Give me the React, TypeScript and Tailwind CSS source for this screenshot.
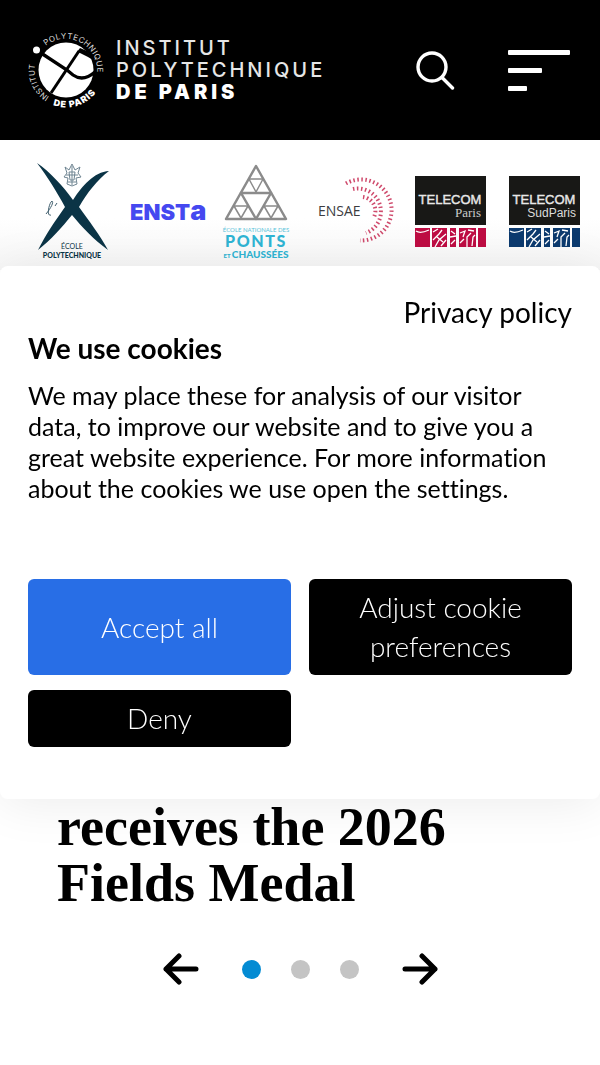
import React from 'react'

const Emblem = () => {
	return (
		<svg viewBox="0 0 80 80" className="h-20 w-20 shrink-0 overflow-visible" role="img" aria-label="Institut Polytechnique de Paris">
			<defs>
				<path id="ringTop" d="M18.800 15.900 A31.500 31.500 0 0 1 68 52" />
				<path id="ringBottom" d="M26.200 75.200 A37.500 37.500 0 0 0 76.500 40" />
				<path id="ringLeft" d="M22.300 66.700 A31.500 31.500 0 0 1 9.500 29" />
			</defs>
			<circle cx="39" cy="40" r="27.500" fill="#fff" />
			<circle cx="9.500" cy="20" r="3.500" fill="#fff" />
			<path d="M14 23 L40 40 L46 45 C53 50 61 48 68 42" fill="none" stroke="#000" strokeWidth="3.300" />
			<path d="M24 63 L52 21" fill="none" stroke="#000" strokeWidth="3" />
			<path d="M50 22 L53 18 L60 21 L66 30 L61 27 L53 23 Z" fill="#000" />
			<g fill="#ddd" fontFamily="Inter, sans-serif" fontSize="8">
				<text className="tracking-wider"><textPath href="#ringTop">POLYTECHNIQUE</textPath></text>
				<text><textPath href="#ringLeft">INSTITUT</textPath></text>
				<text fontWeight="900" fontSize="9" fill="#fff" className="tracking-widest"><textPath href="#ringBottom">DE PARIS</textPath></text>
			</g>
		</svg>
	)
}

const Header = () => {
	return (
		<header className="flex h-[140px] items-center bg-black pl-[27px] pr-[30px] text-white">
			<a href="#" className="flex items-center gap-[9px]">
				<Emblem />
				<div className="font-[Inter,sans-serif] text-[20px] font-medium leading-[22px] tracking-[0.15em] text-[#e6e6e6]">
					<div>INSTITUT</div>
					<div>POLYTECHNIQUE</div>
					<div className="font-black tracking-[0.2em] text-white">DE PARIS</div>
				</div>
			</a>
			<button aria-label="Search" className="ml-auto">
				<svg viewBox="0 0 40 40" className="h-10 w-10" fill="none" stroke="#fff" strokeWidth="3.400" strokeLinecap="round">
					<circle cx="17" cy="17" r="14" />
					<path d="M27.500 28 L37.500 38" />
				</svg>
			</button>
			<button aria-label="Menu" className="ml-[53px] flex flex-col gap-[13px]">
				<span className="h-[5px] w-[62px] rounded-[1px] bg-white" />
				<span className="h-[5px] w-[34px] rounded-[1px] bg-white" />
				<span className="h-[5px] w-[19px] rounded-[1px] bg-white" />
			</button>
		</header>
	)
}

const LogoX = () => (
	<svg viewBox="0 0 94 104" className="w-full">
		<path
			d="M11 5 C24 14 37 28 47 42 C56 28 68 14 83 13 C71 22 61 35 53 49 C63 63 74 77 82 92 C68 82 56 69 46 57 C36 69 25 82 12 92 C20 76 29 63 39 49 C31 34 21 18 11 5 Z"
			fill="#0b3446"
		/>
		<g fill="none" stroke="#6f8592" strokeWidth="1">
			<path d="M39 9 L43 12 L46 6 L49 12 L54 9 L52 15 L55 19 L50 20 L51 26 L46 28 L41 26 L42 20 L38 19 L41 15 Z" />
			<path d="M43 14 L49 14 L48 22 L44 22 Z M46 8 V27 M40 17 H52 M42 24 H50" />
			<path d="M20 56 C25 50 28 44 26 43 C23 45 20 59 25 57 M31 45 L29 48" stroke="#41606f" />
		</g>
		<g fill="#0b3446" textAnchor="middle" fontFamily="Lato, sans-serif" fontSize="7">
			<text x="46" y="91">ÉCOLE</text>
			<text x="46" y="100" fontWeight="900">POLYTECHNIQUE</text>
		</g>
	</svg>
)

const LogoEnsta = () => (
	<svg viewBox="0 0 94 104" className="w-full">
		<text x="10" y="62" fill="#4548f0" fontFamily="Inter, sans-serif" fontWeight="900" fontSize="22">
			ENST<tspan fontSize="27">a</tspan>
		</text>
	</svg>
)

const LogoPonts = () => (
	<svg viewBox="0 0 94 104" className="w-full">
		<g fill="none" stroke="#8b8b8b" strokeLinejoin="round">
			<path d="M42 8 L72 61 H12 Z" strokeWidth="2.500" />
			<path d="M27 35 H57 L42 61 Z" strokeWidth="2.500" />
			<path d="M35 21 H49 L42 34 Z M20 48 H34 L27 60 Z M50 48 H64 L57 60 Z" strokeWidth="1.500" />
		</g>
		<g fill="#2fb4d3" textAnchor="middle" fontFamily="Lato, sans-serif">
			<text x="42" y="74" fontSize="6" opacity="0.800">ÉCOLE NATIONALE DES</text>
			<text x="42" y="89" fontSize="16" fontWeight="900" className="tracking-widest">PONTS</text>
			<text x="42" y="100" fontSize="10" fontWeight="900"><tspan fontSize="6">ET </tspan>CHAUSSÉES</text>
		</g>
	</svg>
)

const LogoEnsae = () => (
	<svg viewBox="0 0 94 104" className="w-full">
		<g fill="none" stroke="#cf4a6c" strokeWidth="4" strokeDasharray="1.500 2.500">
			<path d="M38 25.500 A30.500 30.500 0 1 1 52 82.500" />
			<path d="M45 31 A23 23 0 0 1 58 75" />
			<path d="M55 39 A14 14 0 0 1 66 59" />
		</g>
		<text x="10" y="58" fill="#3c3c3f" fontFamily="Open Sans, sans-serif" fontSize="14" fontWeight="500">ENSAE</text>
	</svg>
)

const LogoTelecom = ({ color, children }: any) => (
	<svg viewBox="0 0 94 104" className="w-full">
		<rect x="13" y="18" width="71" height="49" fill="#181816" />
		<text x="48" y="46" textAnchor="middle" fill="#e8e8e8" stroke="#e8e8e8" strokeWidth="0.400" fontFamily="Liberation Sans, sans-serif" fontSize="13">TELECOM</text>
		{children}
		<path d="M13 70 H28 V89 H13 Z M30 70 H45 V89 H30 Z M48 70 H54 V89 H48 Z M57 70 H74 V89 H57 Z M76 70 H84 V89 H76 Z" fill={color} />
		<path
			d="M14 73 Q18 76 27 72 M31 74 L36 71 M31 82 L37 76 L40 72 M33 89 L37 82 L44 76 M39 88 L44 82 M35 79 L41 84 M49 73 L53 76 M48 79 L54 78 M49 86 L53 82 M58 75 L63 73 L61 79 M58 85 L62 81 M65 89 V79 L69 75 M66 72 L72 73 M70 88 L71 79 L73 77"
			fill="none"
			stroke="#fff"
			strokeWidth="1.300"
		/>
	</svg>
)

const Partners = () => {
	return (
		<div className="bg-linear-to-b from-white from-60% to-[#f6f6f6] pb-2 pl-[26px] pr-[10px] pt-[18px]">
			<div className="grid grid-cols-6">
				<LogoX />
				<LogoEnsta />
				<LogoPonts />
				<LogoEnsae />
				<LogoTelecom color="#be0d43">
					<text x="79" y="59" textAnchor="end" fill="#ccc" fontFamily="Liberation Serif, serif" fontSize="13">Paris</text>
				</LogoTelecom>
				<LogoTelecom color="#0c3a6e">
					<text x="80" y="59" textAnchor="end" fill="#ddd" fontFamily="Liberation Sans, sans-serif" fontSize="12">SudParis</text>
				</LogoTelecom>
			</div>
		</div>
	)
}

const Arrow = ({ d }: any) => (
	<svg viewBox="0 0 36 32" className="h-8 w-9" fill="none" stroke="#000" strokeWidth="5" strokeLinecap="round" strokeLinejoin="round">
		<path d={d} />
	</svg>
)

const Carousel = () => {
	return (
		<section className="px-[57px] pb-20 pt-[529px]">
			<h2 className="font-['Liberation_Serif',serif] text-[54px] font-bold leading-[56px]">
				receives the 2026 Fields Medal
			</h2>
			<div className="mt-[42px] flex items-center justify-center gap-[43px]">
				<button aria-label="Previous"><Arrow d="M16 3 L3 16 L16 29 M3 16 H33" /></button>
				<div className="flex gap-[30px]">
					<button aria-label="Slide 1" className="size-[19px] rounded-full bg-[#038bd3]" />
					<button aria-label="Slide 2" className="size-[19px] rounded-full bg-[#c4c4c4]" />
					<button aria-label="Slide 3" className="size-[19px] rounded-full bg-[#c4c4c4]" />
				</div>
				<button aria-label="Next"><Arrow d="M20 3 L33 16 L20 29 M33 16 H3" /></button>
			</div>
		</section>
	)
}

const CookieDialog = () => {
	return (
		<div className="fixed inset-0 flex items-center">
			<div role="dialog" aria-labelledby="cookieTitle" className="w-full rounded-lg bg-white px-7 pb-[52px] pt-7 shadow-[0_4px_50px_rgba(0,0,0,0.08)] [font-variant-ligatures:none]">
				<div className="text-right text-[28px] leading-9">
					<a href="#">Privacy policy</a>
				</div>
				<h1 id="cookieTitle" className="text-[28px] font-bold leading-9">We use cookies</h1>
				<p className="mt-[14px] text-[25px] leading-[31px]">
					We may place these for analysis of our visitor data, to improve our website and to give you a great website experience. For more information about the cookies we use open the settings.
				</p>
				<div className="mt-[75px] grid grid-cols-2 gap-x-[18px] gap-y-[15px] text-[28px] font-light leading-[39px] text-white">
					<button className="rounded-md bg-[#286ee6] px-8 py-[9px]">Accept all</button>
					<button className="rounded-md bg-black px-8 py-[9px]">Adjust cookie preferences</button>
					<button className="rounded-md bg-black px-8 py-[9px]">Deny</button>
				</div>
			</div>
		</div>
	)
}

const App = () => {
	return (
		<div className="min-h-screen bg-white font-[Lato,sans-serif] text-black">
			<Header />
			<Partners />
			<Carousel />
			<CookieDialog />
		</div>
	)
}

export default App
